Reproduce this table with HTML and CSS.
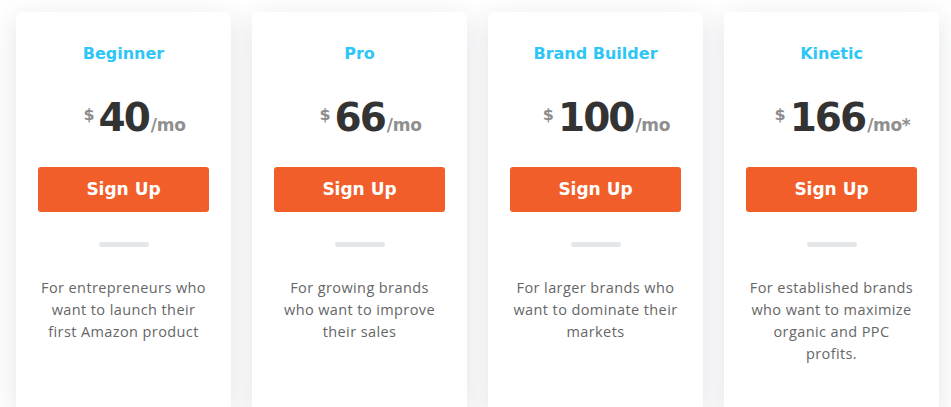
FILE: index.html
```html
<!DOCTYPE html>
<html>
<head>
<meta charset="utf-8">
<link rel="stylesheet" href="styles.css">
</head>
<body>
<div class="plans">
  <div class="card">
    <h3 class="title">Beginner</h3>
    <div class="price"><span class="cur">$</span><span class="amt">40</span><span class="per">/mo</span></div>
    <a class="btn">Sign Up</a>
    <div class="sep"></div>
    <p class="desc">For entrepreneurs who want to launch their first Amazon product</p>
  </div>
  <div class="card">
    <h3 class="title">Pro</h3>
    <div class="price"><span class="cur">$</span><span class="amt">66</span><span class="per">/mo</span></div>
    <a class="btn">Sign Up</a>
    <div class="sep"></div>
    <p class="desc">For growing brands who want to improve their sales</p>
  </div>
  <div class="card">
    <h3 class="title">Brand Builder</h3>
    <div class="price"><span class="cur">$</span><span class="amt">100</span><span class="per">/mo</span></div>
    <a class="btn">Sign Up</a>
    <div class="sep"></div>
    <p class="desc">For larger brands who want to dominate their markets</p>
  </div>
  <div class="card">
    <h3 class="title">Kinetic</h3>
    <div class="price"><span class="cur">$</span><span class="amt">166</span><span class="per">/mo*</span></div>
    <a class="btn">Sign Up</a>
    <div class="sep"></div>
    <p class="desc">For established brands who want to maximize organic and PPC profits.</p>
  </div>
</div>
</body>
</html>
```
FILE: styles.css
```css
html, body {
  margin: 0;
  padding: 0;
  background: #ffffff;
  overflow: hidden;
}
.plans {
  display: flex;
  gap: 21px;
  padding: 12px 0 0 16px;
}
.card {
  width: 215px;
  height: 400px;
  flex: none;
  background: #ffffff;
  border-radius: 6px 6px 0 0;
  box-shadow: 0 6px 28px rgba(40, 50, 70, 0.13);
  padding: 32px 22px 0;
  box-sizing: border-box;
  text-align: center;
}
.title {
  margin: 0;
  font-family: "DejaVu Sans", sans-serif;
  font-weight: bold;
  font-size: 16px;
  line-height: 20px;
  color: #2ec6f7;
}
.price {
  margin-top: 34px;
  padding-left: 22px;
  height: 40px;
  display: flex;
  justify-content: center;
  align-items: baseline;
  font-family: "DejaVu Sans", sans-serif;
  font-weight: bold;
}
.cur {
  font-size: 16px;
  color: #8c8c8c;
  align-self: flex-start;
  margin-top: 7px;
  margin-right: 4px;
}
.amt {
  font-size: 39px;
  line-height: 40px;
  color: #333333;
  letter-spacing: -2px;
  margin-right: 2px;
}
.per {
  font-size: 17px;
  color: #8f8f8f;
  font-weight: bold;
  letter-spacing: -0.3px;
}
.btn {
  display: block;
  margin-top: 29px;
  height: 45px;
  line-height: 45px;
  background: #f15e29;
  border-radius: 3px;
  color: #ffffff;
  font-family: "DejaVu Sans", sans-serif;
  font-weight: bold;
  font-size: 17px;
}
.sep {
  width: 50px;
  height: 5px;
  border-radius: 3px;
  background: #e4e7ea;
  margin: 30px auto 0;
}
.desc {
  margin: 30px 0 0;
  padding: 0;
  font-family: "Open Sans", sans-serif;
  font-size: 14.5px;
  letter-spacing: 0.4px;
  line-height: 22px;
  color: #666666;
}
```
